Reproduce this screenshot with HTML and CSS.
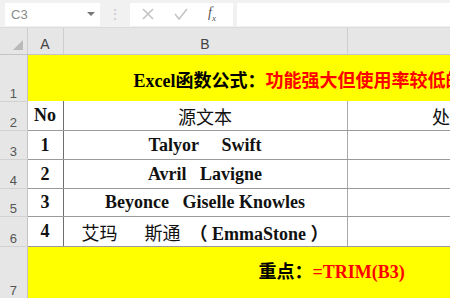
FILE: index.html
```html
<!DOCTYPE html>
<html lang="zh">
<head>
  <meta charset="UTF-8" />
  <title>TRIM</title>
  <link rel="stylesheet" href="styles.css">
</head>
<body>
  <div class="toolbar">
    <div class="namebox">
      <span class="ref">C3</span>
      <span class="caret"></span>
    </div>
    <div class="grip">⋮</div>
    <div class="fxbox">
      <svg width="14" height="14" viewBox="0 0 14 14"><path d="M2 2 L12 12 M12 2 L2 12" stroke="#c4c4c4" stroke-width="1.6" fill="none"/></svg>
      <svg width="16" height="14" viewBox="0 0 16 14"><path d="M2 7 L6 12 L14 2" stroke="#c4c4c4" stroke-width="1.6" fill="none"/></svg>
      <span class="fx">f<sub>x</sub></span>
    </div>
    <div class="formula"></div>
  </div>

  <table class="sheet">
    <colgroup>
      <col class="c-rh">
      <col class="c-a">
      <col class="c-b">
      <col class="c-c">
    </colgroup>
    <tr class="colhead">
      <th class="corner"><span class="tri"></span></th>
      <th>A</th>
      <th>B</th>
      <th></th>
    </tr>
    <tr class="r1">
      <th class="rowhead">1</th>
      <td colspan="3" class="yellow title"><b>Excel函数公式：</b><b class="red">功能强大但使用率较低的</b></td>
    </tr>
    <tr class="r2">
      <th class="rowhead">2</th>
      <td class="no"><b>No</b></td>
      <td class="txt">源文本</td>
      <td class="c right">处</td>
    </tr>
    <tr class="r3">
      <th class="rowhead">3</th>
      <td class="no"><b>1</b></td>
      <td class="txt"><b>Talyor&nbsp;&nbsp;&nbsp;&nbsp;&nbsp;Swift</b></td>
      <td class="c"></td>
    </tr>
    <tr class="r4">
      <th class="rowhead">4</th>
      <td class="no"><b>2</b></td>
      <td class="txt"><b>Avril&nbsp;&nbsp;&nbsp;Lavigne</b></td>
      <td class="c"></td>
    </tr>
    <tr class="r5">
      <th class="rowhead">5</th>
      <td class="no"><b>3</b></td>
      <td class="txt"><b>Beyonce&nbsp;&nbsp;&nbsp;Giselle Knowles</b></td>
      <td class="c"></td>
    </tr>
    <tr class="r6">
      <th class="rowhead">6</th>
      <td class="no"><b>4</b></td>
      <td class="txt">艾玛&nbsp;&nbsp;&nbsp;&nbsp;&nbsp;&nbsp;斯通&nbsp;&nbsp;<b>（&nbsp;EmmaStone&nbsp;）</b></td>
      <td class="c"></td>
    </tr>
    <tr class="r7">
      <th class="rowhead">7</th>
      <td colspan="3" class="yellow note"><b>重点：</b><b class="red">=TRIM(B3)</b></td>
    </tr>
  </table>
</body>
</html>
```

FILE: styles.css
```css
body {
  margin: 0;
  width: 450px;
  height: 298px;
  overflow: hidden;
  background: #fff;
  font-family: "Liberation Serif", "Noto Sans CJK SC", serif;
}
.toolbar {
  display: flex;
  align-items: center;
  height: 28px;
  background: #f1f1f1;
  border-bottom: 1px solid #dcdcdc;
  box-sizing: border-box;
  padding-top: 1px;
  font-family: "Liberation Sans", sans-serif;
}
.namebox {
  display: flex;
  align-items: center;
  justify-content: space-between;
  width: 95px;
  height: 23px;
  margin-left: 5px;
  background: #fff;
  box-sizing: border-box;
  padding: 0 5px 0 6px;
}
.ref {
  font-size: 13px;
  color: #8a8a8a;
}
.caret {
  width: 0;
  height: 0;
  border-left: 4px solid transparent;
  border-right: 4px solid transparent;
  border-top: 4px solid #777;
}
.grip {
  width: 30px;
  text-align: center;
  color: #c8c8c8;
  font-size: 14px;
}
.fxbox {
  display: flex;
  align-items: center;
  width: 103px;
  height: 23px;
  background: #fff;
  box-sizing: border-box;
  padding-left: 11px;
  gap: 18px;
}
.fx {
  font-family: "Liberation Serif", serif;
  font-style: italic;
  font-size: 14px;
  color: #555;
  margin-left: 1px;
}
.fx sub {
  font-size: 9px;
}
.formula {
  flex: 1;
  height: 23px;
  margin-left: 4px;
  background: #fff;
}
.sheet {
  border-collapse: collapse;
  table-layout: fixed;
  width: 560px;
}
.c-rh { width: 27px; }
.c-a { width: 36px; }
.c-b { width: 284px; }
.c-c { width: 213px; }
.sheet td, .sheet th {
  padding: 0;
  overflow: hidden;
  white-space: nowrap;
}
.sheet .colhead th {
  height: 26px;
  background: #e6e6e6;
  border-right: 1px solid #cfcfcf;
  border-bottom: 1px solid #c4c4c4;
  font-family: "Liberation Sans", sans-serif;
  font-weight: normal;
  font-size: 14px;
  color: #444;
  padding-top: 6px;
  box-sizing: border-box;
}
.corner {
  position: relative;
}
.tri {
  position: absolute;
  right: 4px;
  bottom: 4px;
  width: 0;
  height: 0;
  border-left: 10px solid transparent;
  border-bottom: 10px solid #b9b9b9;
}
.sheet .rowhead {
  background: #e6e6e6;
  border-right: 1px solid #c4c4c4;
  border-bottom: 1px solid #d2d2d2;
  font-family: "Liberation Sans", sans-serif;
  font-weight: normal;
  font-size: 13px;
  color: #555;
  vertical-align: bottom;
  padding-bottom: 0;
}
.r1 { height: 47px; }
.r2 { height: 29px; }
.r3 { height: 29px; }
.r4 { height: 29px; }
.r5 { height: 28px; }
.r6 { height: 30px; }
.r7 { height: 52px; }
.yellow {
  background: #ffff00;
}
.red {
  color: #ff0000;
}
.sheet .title {
  font-size: 18px;
  padding-left: 106px;
  padding-top: 2px;
}
.sheet .note {
  font-size: 18px;
  padding-left: 231px;
  padding-bottom: 4px;
}
.sheet .no, .sheet .txt, .sheet .c {
  border-bottom: 1px solid #9a9a9a;
  font-size: 18px;
  color: #111;
  padding-top: 1px;
}
.sheet .no {
  text-align: center;
  border-right: 1px solid #6e6e6e;
}
.sheet .txt {
  text-align: center;
  border-right: 1px solid #a8a8a8;
}
.sheet .right {
  text-align: right;
  padding-right: 110px;
}
```
